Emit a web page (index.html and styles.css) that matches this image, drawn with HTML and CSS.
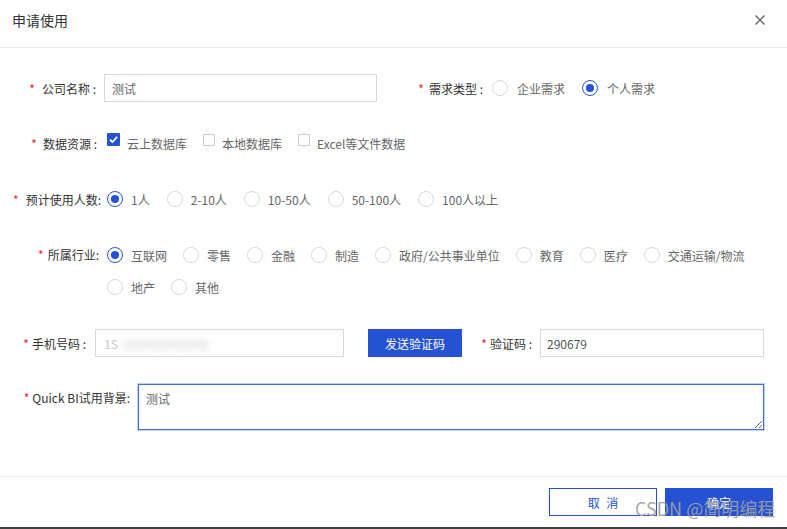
FILE: index.html
```html
<!DOCTYPE html>
<html lang="zh-CN">
<head>
<meta charset="utf-8">
<title>申请使用</title>
<link rel="stylesheet" href="styles.css">
</head>
<body>
<div class="modal">
  <div class="header">
    <div class="title">申请使用</div>
    <svg class="close" width="12" height="12" viewBox="0 0 12 12"><path d="M1.5 1.5 L10.5 10.5 M10.5 1.5 L1.5 10.5" stroke="#666" stroke-width="1.4" fill="none"/></svg>
  </div>
  <div class="form">
    <div class="row r-tight">
      <div class="label w104 pr8"><span class="req m7">*</span>公司名称 :</div>
      <div class="input w273">测试</div>
      <div class="label w115 pr9"><span class="req m5">*</span>需求类型 :</div>
      <label class="opt o9"><span class="radio"></span>企业需求</label>
      <label class="opt o9"><span class="radio on"></span>个人需求</label>
    </div>
    <div class="row">
      <div class="label w107 pr10"><span class="req m6">*</span>数据资源 :</div>
      <label class="opt ck"><span class="box on"><svg width="13" height="13" viewBox="0 0 13 13"><path d="M3 6.6 L5.4 9 L10.2 3.8" stroke="#fff" stroke-width="1.8" fill="none"/></svg></span>云上数据库</label>
      <label class="opt ck"><span class="box"></span>本地数据库</label>
      <label class="opt ck"><span class="box"></span>Excel等文件数据</label>
    </div>
    <div class="row">
      <div class="label w107 pr6"><span class="req m7">*</span>预计使用人数:</div>
      <label class="opt"><span class="radio on"></span>1人</label>
      <label class="opt"><span class="radio"></span>2-10人</label>
      <label class="opt"><span class="radio"></span>10-50人</label>
      <label class="opt"><span class="radio"></span>50-100人</label>
      <label class="opt"><span class="radio"></span>100人以上</label>
    </div>
    <div class="row top">
      <div class="label w107 pr8 lh28"><span class="req m4">*</span>所属行业:</div>
      <div class="wrap">
        <div class="line">
          <label class="opt"><span class="radio on"></span>互联网</label>
          <label class="opt"><span class="radio"></span>零售</label>
          <label class="opt"><span class="radio"></span>金融</label>
          <label class="opt"><span class="radio"></span>制造</label>
          <label class="opt"><span class="radio"></span>政府/公共事业单位</label>
          <label class="opt"><span class="radio"></span>教育</label>
          <label class="opt"><span class="radio"></span>医疗</label>
          <label class="opt"><span class="radio"></span>交通运输/物流</label>
        </div>
        <div class="line">
          <label class="opt"><span class="radio"></span>地产</label>
          <label class="opt"><span class="radio"></span>其他</label>
        </div>
      </div>
    </div>
    <div class="row r-tight">
      <div class="label w95 pr9"><span class="req m3">*</span>手机号码 :</div>
      <div class="input w249 phone"><span class="ph1">1S</span><span class="ph2">7▇▇▇▇▇▇▇</span></div>
      <button class="btn-send">发送验证码</button>
      <div class="label w78 pr8"><span class="req m3">*</span>验证码 :</div>
      <div class="input w224 dark">290679</div>
    </div>
    <div class="row top">
      <div class="label w138 pr8 lh28"><span class="req m3">*</span>Quick BI试用背景:</div>
      <textarea class="area">测试</textarea>
    </div>
  </div>
  <div class="footer">
    <button class="btn btn-cancel">取 消</button>
    <button class="btn btn-ok">确定</button>
  </div>
  <div class="watermark">CSDN @简明编程</div>
</div>
<div class="bottom-bar"></div>
</body>
</html>
```

FILE: styles.css
```css
* { box-sizing: border-box; }
html, body { margin: 0; padding: 0; }
body {
  width: 787px;
  height: 529px;
  overflow: hidden;
  background: #fff;
  font-family: "Noto Sans CJK SC", "Noto Sans", sans-serif;
  font-size: 12px;
  color: #333;
  display: flex;
  flex-direction: column;
}
.modal {
  position: relative;
  height: 527px;
  display: flex;
  flex-direction: column;
  background: #fff;
}
.header {
  height: 48px;
  border-bottom: 1px solid #e8e8e8;
  display: flex;
  align-items: center;
  justify-content: space-between;
  padding: 0 21px 8px 12px;
}
.title { font-size: 14px; color: #333; }
.close { display: block; }
.form {
  flex: 1;
  padding-top: 26px;
  border-bottom: 1px solid #e8e8e8;
}
.row {
  display: flex;
  align-items: center;
  min-height: 28px;
  margin-bottom: 28px;
}
.row.r-tight { margin-bottom: 27px; }
.row.top { align-items: flex-start; }
.label {
  flex: none;
  text-align: right;
  white-space: nowrap;
  color: #333;
}
.lh28 { line-height: 28px; }
.w78 { width: 78px; }
.w95 { width: 95px; }
.w104 { width: 104px; }
.w107 { width: 107px; }
.w115 { width: 115px; }
.w138 { width: 138px; }
.pr6 { padding-right: 6px; }
.pr8 { padding-right: 8px; }
.pr9 { padding-right: 9px; }
.pr10 { padding-right: 10px; }
.req { color: #f5222d; }
.m3 { margin-right: 3px; }
.m4 { margin-right: 4px; }
.m5 { margin-right: 5px; }
.m6 { margin-right: 6px; }
.m7 { margin-right: 7px; }
.input {
  flex: none;
  height: 28px;
  border: 1px solid #d9d9d9;
  padding: 0 7px;
  display: flex;
  align-items: center;
  color: #666;
  white-space: nowrap;
  overflow: hidden;
}
.input.dark { color: #555; padding-left: 6px; }
.w224 { width: 224px; }
.w249 { width: 249px; }
.w273 { width: 273px; }
.phone { padding-left: 8px; }
.ph1 { color: #c8c8c8; }
.ph2 { color: #eee; filter: blur(3px); }
.opt {
  display: flex;
  align-items: center;
  margin-right: 17px;
  color: #666;
  white-space: nowrap;
  height: 28px;
}
.radio {
  width: 16px;
  height: 16px;
  border: 1px solid #d9d9d9;
  border-radius: 50%;
  margin-right: 8px;
  display: flex;
  align-items: center;
  justify-content: center;
  background: #fff;
}
.o9 .radio { margin-right: 9px; }
.radio.on { border-color: #2452d3; }
.radio.on::after {
  content: "";
  width: 8px;
  height: 8px;
  border-radius: 50%;
  background: #2452d3;
}
.ck { margin-right: 15px; }
.box {
  width: 12px;
  height: 12px;
  border: 1px solid #c8c8c8;
  border-radius: 1px;
  margin: 0 7px 7px 1px;
  background: #fff;
}
.box.on {
  width: 13px;
  height: 13px;
  border: none;
  background: #2452d3;
  margin: 0 7px 7px 0;
}
.box svg { display: block; }
.wrap {
  flex: none;
  display: flex;
  flex-direction: column;
  gap: 4px;
}
.line {
  display: flex;
  white-space: nowrap;
}
.line .opt { margin-right: 16px; }
.btn-send {
  flex: none;
  margin-left: 24px;
  width: 94px;
  height: 28px;
  border: none;
  background: #2452d3;
  color: #fff;
  font: inherit;
  font-size: 12px;
  padding: 0;
}
.area {
  flex: none;
  width: 626px;
  height: 46px;
  border: 1px solid #3f6fe0;
  box-shadow: 0 0 0 1px #c3d2f4;
  outline: none;
  padding: 5px 7px;
  font: inherit;
  font-size: 12px;
  line-height: 18px;
  color: #666;
  margin: 0;
}
.footer {
  height: 50px;
  display: flex;
  justify-content: flex-end;
  align-items: flex-start;
  padding: 11px 14px 0 0;
  gap: 8px;
}
.btn {
  width: 108px;
  height: 28px;
  font: inherit;
  font-size: 12px;
  padding: 0;
}
.btn-cancel {
  background: #fff;
  border: 1px solid #2452d3;
  color: #2452d3;
  word-spacing: 4px;
}
.btn-ok {
  background: #2452d3;
  border: 1px solid #2452d3;
  color: #fff;
}
.watermark {
  position: absolute;
  left: 635px;
  top: 496px;
  font-size: 18px;
  line-height: 24px;
  color: rgba(160, 160, 160, 0.92);
  white-space: nowrap;
}
.bottom-bar {
  height: 2px;
  background: #404040;
}
```
